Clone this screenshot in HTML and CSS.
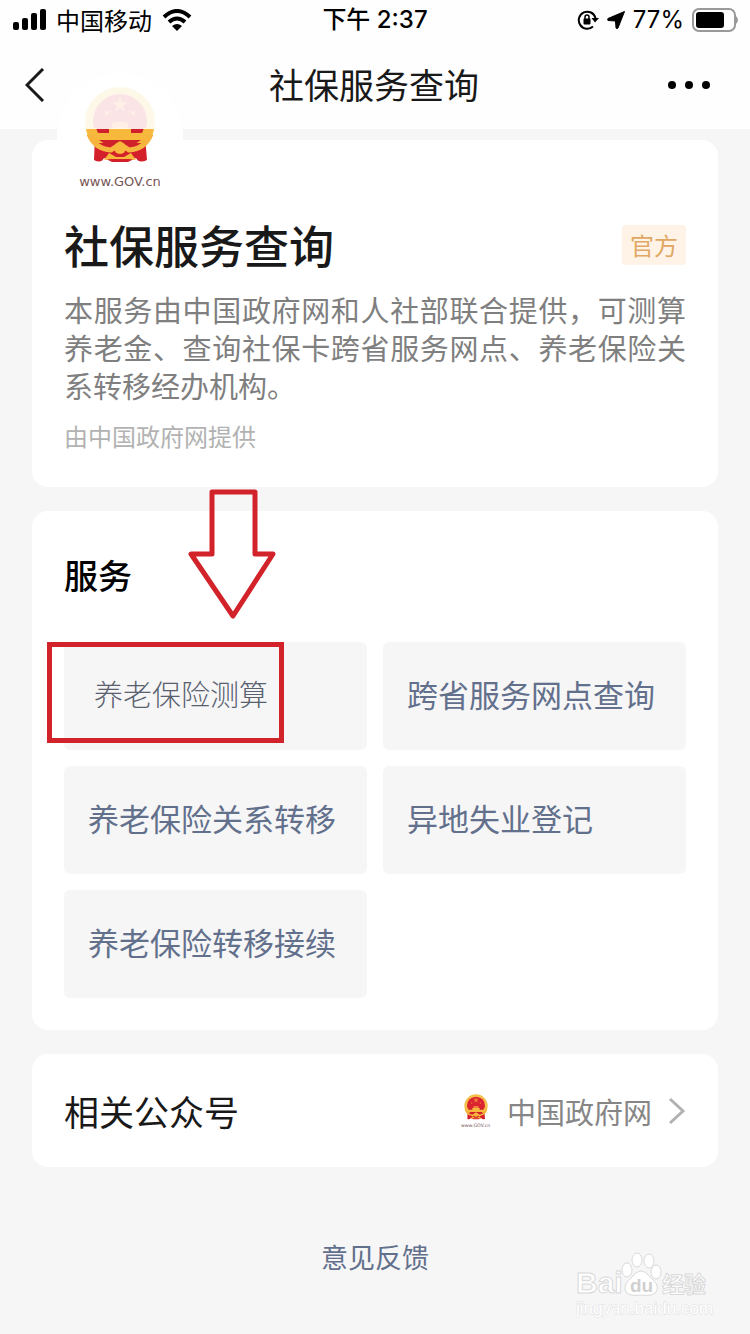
FILE: index.html
```html
<!DOCTYPE html>
<html lang="zh-CN">
<head>
    <meta charset="UTF-8">
    <meta name="viewport" content="width=device-width, initial-scale=1.0">
    <title>社保服务查询</title>
    <link rel="stylesheet" href="styles.css">
</head>
<body>
    <svg class="defs" width="0" height="0" aria-hidden="true">
        <symbol id="emblem" viewBox="0 0 72 78">
            <circle cx="36" cy="36" r="35" fill="#f6c04d"/>
            <path d="M11 50 L18 54 L54 54 L61 50 L63 74 Q55 78 52 72 L44 76 L28 76 L20 72 Q17 78 10 74 Z" fill="#d3202b"/>
            <circle cx="36" cy="35" r="27" fill="#dc2430"/>
            <path d="M36 10 l2 6 h6 l-5 4 2 6 -5 -4 -5 4 2 -6 -5 -4 h6 Z" fill="#f0803c"/>
            <circle cx="23" cy="27" r="2" fill="#f0803c"/>
            <circle cx="49" cy="27" r="2" fill="#f0803c"/>
            <path d="M28 42 V38 L31 36 H41 L44 38 V42 Z" fill="#f0803c"/>
            <path d="M3 42 H69 Q68 50 58 57 H14 Q4 50 3 42 Z" fill="#f8b83c"/>
            <path d="M12 42 H25 V47 H14 Z M47 42 H60 L58 47 H47 Z M15 54 H57 L48 60 H24 Z" fill="#cf202c"/>
            <path d="M5 48 Q11 63 27 64 L36 58 L45 64 Q61 63 67 48" fill="none" stroke="#f6b53e" stroke-width="5"/>
            <circle cx="36" cy="62" r="6" fill="#f8b83c"/>
            <path d="M20 74 L25 67 L32 71 H40 L47 67 L52 74 L45 73 H27 Z" fill="#f8b83c"/>
        </symbol>
    </svg>

    <header class="header">
        <div class="status-bar">
            <div class="status-left">
                <svg width="34" height="24" viewBox="0 0 34 24" aria-hidden="true">
                    <rect x="1" y="14" width="6" height="8" rx="2"/>
                    <rect x="10" y="10" width="6" height="12" rx="2"/>
                    <rect x="19" y="5" width="6" height="17" rx="2"/>
                    <rect x="28" y="1" width="6" height="21" rx="2"/>
                </svg>
                <span>中国移动</span>
                <svg width="30" height="22" viewBox="0 0 30 22" aria-hidden="true">
                    <path d="M2 8 Q15 -4 28 8" fill="none" stroke="#000" stroke-width="4"/>
                    <path d="M7 13 Q15 6 23 13" fill="none" stroke="#000" stroke-width="4"/>
                    <path d="M10 17 Q15 13 20 17 L15 22 Z"/>
                </svg>
            </div>
            <div class="status-time">下午 2:37</div>
            <div class="status-right">
                <svg width="22" height="22" viewBox="0 0 22 22" aria-hidden="true">
                    <path d="M16 17.5 A8.5 8.5 0 1 1 18.5 9" fill="none" stroke="#000" stroke-width="2"/>
                    <path d="M14.5 9 H22 L18 13.5 Z"/>
                    <rect x="6.5" y="9.5" width="7" height="6" rx="1"/>
                    <path d="M8 10 V8 a2 2 0 0 1 4 0 V10" fill="none" stroke="#000" stroke-width="1.5"/>
                </svg>
                <svg width="18" height="18" viewBox="0 0 18 18" aria-hidden="true">
                    <path d="M17.5 0.5 L11 17 Q10 18 9 17 L8.5 10 L1 9.5 Q0 8.5 1 7.5 Z" stroke="#000" stroke-width="1"/>
                </svg>
                <span>77%</span>
                <svg width="46" height="24" viewBox="0 0 46 24" aria-hidden="true">
                    <rect x="1" y="1" width="42" height="22" rx="6" fill="none" stroke="#999" stroke-width="2"/>
                    <rect x="4" y="4" width="28" height="16" rx="3"/>
                    <path d="M44 8 Q48 12 44 16 Z" fill="#999"/>
                </svg>
            </div>
        </div>
        <nav class="nav">
            <button class="nav-button" type="button" aria-label="返回">
                <svg width="20" height="34" viewBox="0 0 20 34" aria-hidden="true">
                    <path d="M18 1 L2 17 L18 33" fill="none" stroke="#191919" stroke-width="3"/>
                </svg>
            </button>
            <div class="nav-title">社保服务查询</div>
            <button class="nav-button" type="button" aria-label="更多">
                <svg width="44" height="10" viewBox="0 0 44 10" aria-hidden="true">
                    <circle cx="5" cy="5" r="4"/>
                    <circle cx="22" cy="5" r="4"/>
                    <circle cx="39" cy="5" r="4"/>
                </svg>
            </button>
        </nav>
    </header>

    <main class="content">
        <section class="card intro">
            <div class="logo">
                <svg width="72" height="78" aria-hidden="true"><use href="#emblem"/></svg>
                <span>www.GOV.cn</span>
            </div>
            <div class="intro-head">
                <h1>社保服务查询</h1>
                <span class="tag">官方</span>
            </div>
            <p class="intro-text">本服务由中国政府网和人社部联合提供，可测算养老金、查询社保卡跨省服务网点、养老保险关系转移经办机构。</p>
            <p class="provider">由中国政府网提供</p>
        </section>

        <section class="card services">
            <h2>服务</h2>
            <div class="service-grid">
                <button class="service selected" type="button">养老保险测算</button>
                <button class="service" type="button">跨省服务网点查询</button>
                <button class="service" type="button">养老保险关系转移</button>
                <button class="service" type="button">异地失业登记</button>
                <button class="service" type="button">养老保险转移接续</button>
            </div>
            <!-- 标注：点击养老保险测算 -->
            <svg class="arrow" width="88" height="130" viewBox="0 0 88 130" aria-hidden="true">
                <path d="M24 3 H67 V65 H85 L45 127 L3 65 H24 Z" fill="none" stroke="#d2232a" stroke-width="5" stroke-linejoin="round"/>
            </svg>
            <div class="highlight"></div>
        </section>

        <a class="card account" href="#">
            <span class="account-label">相关公众号</span>
            <span class="account-logo">
                <svg width="24" height="26" aria-hidden="true"><use href="#emblem"/></svg>
                <svg width="30" height="6" viewBox="0 0 90 18" aria-hidden="true">
                    <text x="0" y="14" class="account-url">www.GOV.cn</text>
                </svg>
            </span>
            <span class="account-name">中国政府网</span>
            <svg width="18" height="28" viewBox="0 0 18 28" aria-hidden="true">
                <path d="M2 2 L15 14 L2 26" fill="none" stroke="#b2b2b2" stroke-width="3"/>
            </svg>
        </a>

        <a class="feedback" href="#">意见反馈</a>
    </main>

    <svg class="watermark" width="140" height="68" viewBox="0 0 140 68" aria-hidden="true">
        <g class="mark">
            <text x="0" y="41" class="mark-bai">Bai</text>
            <ellipse cx="51" cy="18" rx="5" ry="7"/>
            <ellipse cx="61" cy="8" rx="5" ry="7"/>
            <ellipse cx="73" cy="9" rx="5" ry="7"/>
            <ellipse cx="80" cy="20" rx="5" ry="7"/>
            <path d="M65 19 Q70 19 74 25 Q83 32 81 38 Q79 45 65 43 Q51 45 49 38 Q48 31 56 25 Q60 19 65 19 Z"/>
            <text x="86" y="40" class="mark-cn">经验</text>
        </g>
        <text x="54" y="40" class="mark-du">du</text>
        <text x="0" y="62" class="mark-url">jingyan.baidu.com</text>
    </svg>
</body>
</html>
```
FILE: styles.css
```css
* {
    margin: 0;
    padding: 0;
    box-sizing: border-box;
    font-family: "Noto Sans CJK SC", sans-serif;
}

body {
    position: relative;
    min-height: 100vh;
    background-color: #f6f6f7;
    color: #191919;
}

button {
    border: none;
    background: none;
    cursor: pointer;
}

a {
    text-decoration: none;
}

svg {
    display: block;
    flex-shrink: 0;
}

.defs {
    position: absolute;
}

/* header */
.header {
    position: relative;
    z-index: 2;
    background-color: rgba(255, 255, 255, 0.88);
}

.status-bar {
    display: grid;
    grid-template-columns: 1fr auto 1fr;
    align-items: center;
    height: 40px;
    padding: 0 12px;
    font-size: 24px;
    line-height: 40px;
    color: #000;
}

.status-left,
.status-right {
    display: flex;
    align-items: center;
    gap: 10px;
}

.status-right {
    justify-content: flex-end;
    gap: 8px;
}

.status-right span,
.status-time {
    font-family: Inter, "Noto Sans CJK SC", sans-serif;
}

.status-time {
    font-weight: 500;
}

.nav {
    display: grid;
    grid-template-columns: 56px 1fr 44px;
    align-items: center;
    height: 89px;
    padding: 0 39px 0 25px;
}

.nav-button {
    display: flex;
    align-items: center;
    height: 48px;
}

.nav-title {
    padding-bottom: 2px;
    font-size: 35px;
    line-height: 48px;
    text-align: center;
}

/* cards */
.content {
    display: flex;
    flex-direction: column;
    gap: 24px;
    padding: 11px 32px 56px;
}

.card {
    position: relative;
    padding: 32px;
    border-radius: 16px;
    background-color: #fff;
}

.intro {
    padding-top: 79px;
    padding-bottom: 35px;
}

.logo {
    position: absolute;
    top: -66px;
    left: 25px;
    display: flex;
    flex-direction: column;
    align-items: center;
    gap: 8px;
    width: 126px;
    height: 126px;
    padding-top: 12px;
    border-radius: 50%;
    background-color: #fff;
}

.logo span {
    font-family: "DejaVu Sans", sans-serif;
    font-size: 13px;
    line-height: 20px;
    color: #755;
}

.intro-head {
    display: flex;
    align-items: center;
    justify-content: space-between;
    height: 52px;
    margin-bottom: 19px;
}

h1 {
    font-size: 45px;
    font-weight: 500;
    line-height: 52px;
}

.tag {
    padding: 0 8px;
    border-radius: 4px;
    background-color: #fff3e8;
    font-size: 24px;
    line-height: 40px;
    color: #e0a862;
}

.intro-text {
    font-size: 29px;
    line-height: 38px;
    text-align: justify;
    color: #7f7f7f;
}

.provider {
    margin-top: 16px;
    font-size: 24px;
    line-height: 32px;
    color: #b2b2b2;
}

.services {
    padding-top: 40px;
}

h2 {
    margin-bottom: 43px;
    font-size: 34px;
    font-weight: 500;
    line-height: 48px;
    color: #000;
}

.service-grid {
    display: grid;
    grid-template-columns: 1fr 1fr;
    gap: 16px;
}

.service {
    height: 108px;
    padding: 0 24px 6px;
    border-radius: 6px;
    background-color: #f6f6f7;
    font-size: 31px;
    text-align: left;
    color: #62708c;
}

.service.selected {
    padding-left: 30px;
    font-size: 29px;
    font-weight: 300;
    color: #59616e;
}

.arrow {
    position: absolute;
    top: -22px;
    left: 156px;
}

.highlight {
    position: absolute;
    top: 131px;
    left: 15px;
    width: 237px;
    height: 101px;
    border: 5px solid #d2232a;
}

.account {
    display: flex;
    align-items: center;
    height: 113px;
    color: #191919;
}

.account-label {
    flex: 1;
    font-size: 35px;
    line-height: 48px;
}

.account-logo {
    display: flex;
    flex-direction: column;
    align-items: center;
    gap: 2px;
    margin-right: 16px;
}

.account-url {
    font-family: "DejaVu Sans", sans-serif;
    font-size: 14px;
    fill: #755;
}

.account-name {
    margin-right: 16px;
    font-size: 29px;
    color: #868686;
}

.feedback {
    align-self: center;
    margin-top: 46px;
    font-size: 27px;
    line-height: 40px;
    color: #62708c;
}

/* watermark */
.watermark {
    position: absolute;
    right: 34px;
    bottom: 14px;
}

.mark {
    fill: #fff;
    stroke: #d9d9d9;
    stroke-width: 1px;
}

.mark-bai,
.mark-du {
    font-family: "Liberation Sans", sans-serif;
    font-size: 30px;
    font-weight: bold;
}

.mark-du {
    font-size: 19px;
    fill: #d0d0d0;
}

.mark-cn {
    font-size: 22px;
    font-weight: bold;
}

.mark-url {
    font-family: "Liberation Sans", sans-serif;
    font-size: 17px;
    fill: #fff;
    stroke: #e0e0e0;
    stroke-width: 1px;
    paint-order: stroke;
}
```
